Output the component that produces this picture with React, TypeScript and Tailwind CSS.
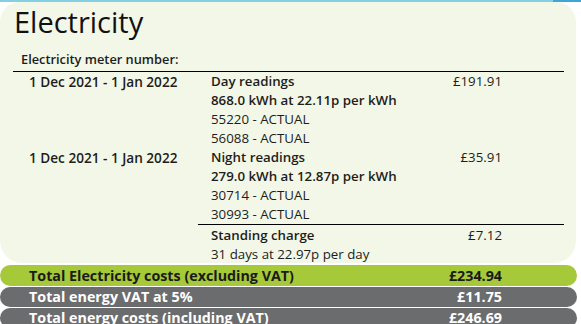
const font = { fontFamily: '"Open Sans", "Liberation Sans", sans-serif' }

type Line = { text: string; bold?: boolean }

interface Reading {
  period: string
  lines: Line[]
  price: string
}

const readings: Reading[] = [
  {
    period: '1 Dec 2021 - 1 Jan 2022',
    price: '£191.91',
    lines: [
      { text: 'Day readings', bold: true },
      { text: '868.0 kWh at 22.11p per kWh', bold: true },
      { text: '55220 - ACTUAL' },
      { text: '56088 - ACTUAL' },
    ],
  },
  {
    period: '1 Dec 2021 - 1 Jan 2022',
    price: '£35.91',
    lines: [
      { text: 'Night readings', bold: true },
      { text: '279.0 kWh at 12.87p per kWh', bold: true },
      { text: '30714 - ACTUAL' },
      { text: '30993 - ACTUAL' },
    ],
  },
]

function Row({ period, lines, price }: { period: string; lines: Line[]; price: string }) {
  return (
    <div className="grid grid-cols-[185px_1fr_auto] text-[13.3px] leading-[19px] text-[#1d1d1b]">
      <div className="pl-[16px] font-semibold text-[13.6px]">{period}</div>
      <div className="pl-[13px]">
        {lines.map((l, i) => (
          <div key={i} className={l.bold ? 'font-semibold' : ''}>
            {l.text}
          </div>
        ))}
      </div>
      <div className="pr-[62px] text-right">{price}</div>
    </div>
  )
}

export default function App() {
  return (
    <div className="w-[581px] h-[324px] bg-white overflow-hidden" style={font}>
      {/* top strip */}
      <div className="flex h-[2px]">
        <div className="flex-1 bg-[#86cfe2]" />
        <div className="w-[28px] bg-[#3ea6d3]" />
      </div>

      <div className="mr-[5px] h-[261px] rounded-[22px] rounded-t-[20px] bg-[#f3f7e8]">
        <h1 className="pl-[14px] pt-[3px] text-[29px] leading-[34px] text-[#111]">Electricity</h1>
        <div className="pl-[21px] pt-[11px] text-[12.8px] leading-[18px] font-semibold text-[#1d1d1b]">
          Electricity meter number:
        </div>

        <div className="ml-[13px] w-[551px] mt-[3px] border-t border-black">
          {readings.map((r, i) => (
            <Row key={i} period={r.period} lines={r.lines} price={r.price} />
          ))}
          <div className="grid grid-cols-[185px_1fr_auto] text-[13.3px] leading-[19px] text-[#1d1d1b]">
            <div />
            <div className="border-t border-black pl-[13px] pt-[1px]">
              <div className="font-semibold">Standing charge</div>
              <div>31 days at 22.97p per day</div>
            </div>
            <div className="border-t border-black pt-[1px] pr-[62px] text-right">£7.12</div>
          </div>
        </div>
      </div>

      {/* totals */}
      <div className="mt-[2px] mr-[4px] flex flex-col gap-[1px] text-[14.3px] font-bold">
        <div className="flex h-[21px] items-center justify-between rounded-[11px] bg-[#a6c93a] pl-[29px] pr-[75px] text-[#1a1a1a]">
          <span>Total Electricity costs (excluding VAT)</span>
          <span>£234.94</span>
        </div>
        <div className="flex h-[20px] items-center justify-between rounded-[11px] bg-[#6b6c6e] pl-[29px] pr-[75px] text-white">
          <span>Total energy VAT at 5%</span>
          <span>£11.75</span>
        </div>
        <div className="flex h-[20px] items-center justify-between rounded-[11px] bg-[#6b6c6e] pl-[29px] pr-[75px] text-white">
          <span>Total energy costs (including VAT)</span>
          <span>£246.69</span>
        </div>
      </div>
    </div>
  )
}
